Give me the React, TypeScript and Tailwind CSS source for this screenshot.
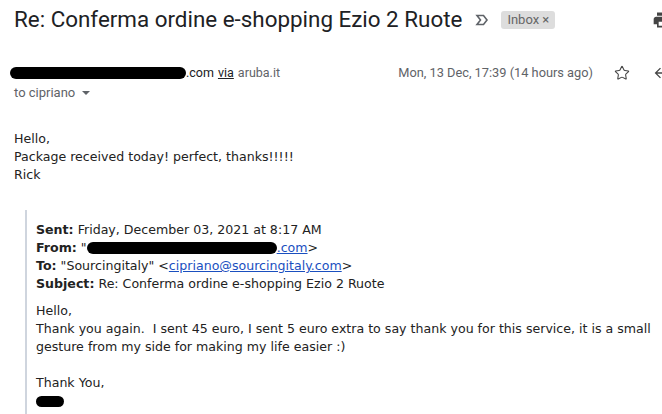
import { Star } from 'lucide-react'

function Redact({ w, h = 11, className = '' }: { w: number; h?: number; className?: string }) {
    return <span className={`inline-block bg-black rounded-full align-middle ${className}`} style={{ width: w, height: h }} />
}

export default function App() {
    return (
        <div className="w-[662px] h-[414px] overflow-hidden bg-white relative">
            {/* Subject */}
            <div className="flex items-center h-[40px] pl-[14px] font-['Roboto',sans-serif]">
                <h1 className="text-[22.4px] text-[#202124] whitespace-nowrap">Re: Conferma ordine e-shopping Ezio 2 Ruote</h1>
                <svg className="ml-[13px] w-[14px] h-[14px] text-[#5f6368]" viewBox="0 0 14 14" fill="none" stroke="currentColor" strokeWidth={1.6}>
                    <path d="M2 2.5h6.5l3.5 4.5-3.5 4.5H2l3.5-4.5z" />
                </svg>
                <span className="ml-[12px] bg-[#dddddd] text-[#666] text-[13px] rounded-[3px] px-[6px] h-[18px] leading-[18px]">Inbox ×</span>
                <svg className="ml-auto mr-[-10px] w-[20px] h-[20px] text-[#444]" viewBox="0 0 24 24" fill="currentColor">
                    <path d="M19 8H5c-1.66 0-3 1.34-3 3v6h4v4h12v-4h4v-6c0-1.66-1.34-3-3-3zm-3 11H8v-5h8v5zm3-7c-.55 0-1-.45-1-1s.45-1 1-1 1 .45 1 1-.45 1-1 1zm-1-9H6v4h12V3z" />
                </svg>
            </div>

            {/* Sender row */}
            <div className="mt-[23px] font-['Roboto',sans-serif]">
                <div className="flex items-center h-[20px] pl-[10px] text-[12.5px]">
                    <Redact w={176} h={12} />
                    <span className="text-[#202124]">.com</span>
                    <span className="ml-[4px] text-[#202124] underline">via</span>
                    <span className="ml-[4px] text-[#5f6368]">aruba.it</span>
                    <span className="ml-auto text-[#5f6368] text-[12.8px]">Mon, 13 Dec, 17:39 (14 hours ago)</span>
                    <Star className="ml-[21px] w-[16px] h-[16px] text-[#444]" strokeWidth={1.6} />
                    <svg className="ml-[22px] mr-[-6px] w-[16px] h-[16px] text-[#444]" viewBox="0 0 24 24" fill="currentColor">
                        <path d="M20 11H7.83l5.59-5.59L12 4l-8 8 8 8 1.41-1.41L7.83 13H20v-2z" />
                    </svg>
                </div>
                <div className="flex items-center h-[20px] pl-[14px] text-[13px] text-[#5f6368]">
                    <span>to cipriano</span>
                    <span className="ml-[7px] w-0 h-0 border-l-[4px] border-r-[4px] border-t-[4px] border-l-transparent border-r-transparent border-t-[#5f6368]" />
                </div>
            </div>

            {/* Body */}
            <div className="mt-[27px] pl-[14px] font-['DejaVu_Sans',Verdana,sans-serif] text-[12.6px] leading-[18px] text-[#222]">
                <p>Hello,</p>
                <p>Package received today! perfect, thanks!!!!!</p>
                <p>Rick</p>

                <div className="mt-[26px] ml-[11px] border-l-2 border-[#cfd5de] pl-[9px] pt-[11px] pb-[40px]">
                    <p><b>Sent:</b> Friday, December 03, 2021 at 8:17 AM</p>
                    <p className="flex items-center">
                        <b>From:</b>&nbsp;"<Redact w={190} h={12} /><span className="text-[#1a4fbf] underline">.com</span>&gt;
                    </p>
                    <p>
                        <b>To:</b> "Sourcingitaly" &lt;<span className="text-[#1a4fbf] underline">cipriano@sourcingitaly.com</span>&gt;
                    </p>
                    <p><b>Subject:</b> Re: Conferma ordine e-shopping Ezio 2 Ruote</p>
                    <p className="mt-[9px]">Hello,</p>
                    <p className="pr-[4px]">Thank you again.&nbsp; I sent 45 euro, I sent 5 euro extra to say thank you for this service, it is a small gesture from my side for making my life easier :)</p>
                    <p className="mt-[18px]">Thank You,</p>
                    <p><Redact w={28} h={11} /></p>
                </div>
            </div>
        </div>
    )
}
